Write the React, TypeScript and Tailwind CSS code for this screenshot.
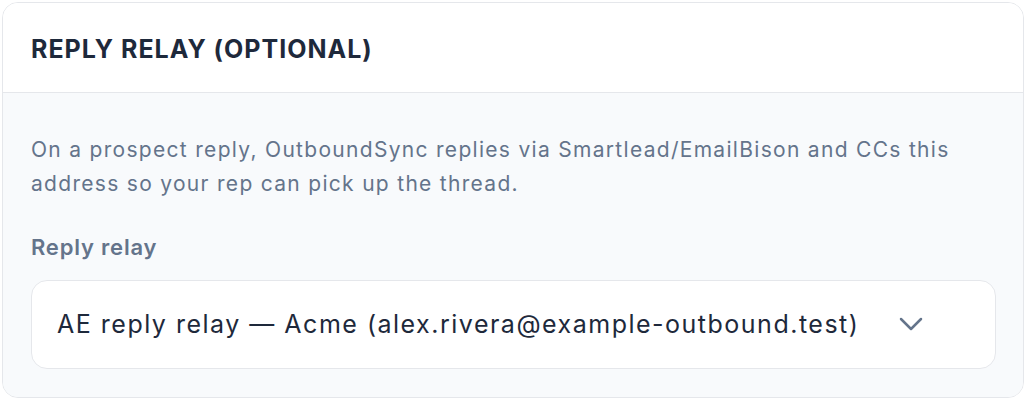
import React from 'react';

export default function App() {
  return (
    <div className="w-[1026px] h-[400px] p-[2px] bg-white" style={{ fontFamily: 'Inter, "Noto Sans", sans-serif' }}>
      <div className="h-full rounded-[16px] border border-[#e5e7eb] overflow-hidden flex flex-col">
        <div className="h-[90px] flex items-center px-[28px] bg-white border-b border-[#e5e7eb] shrink-0">
          <h2 className="text-[25px] font-bold tracking-[1px] text-[#1e293b] pt-[4px]">REPLY RELAY (OPTIONAL)</h2>
        </div>
        <div className="flex-1 bg-[#f8fafc] px-[28px] pt-[40px]">
          <p className="text-[21px] leading-[34px] tracking-[1.3px] text-[#64748b]">
            On a prospect reply, OutboundSync replies via Smartlead/EmailBison and CCs this address so your rep can pick up the thread.
          </p>
          <div className="mt-[31px] text-[22px] leading-[30px] font-semibold tracking-[0.8px] text-[#64748b]">Reply relay</div>
          <div className="mt-[18px] h-[89px] w-[965px] rounded-[16px] border border-[#e5e7eb] bg-white flex items-center pl-[25px] gap-[40px]">
            <span className="text-[25px] tracking-[1.5px] text-[#1e293b]">AE reply relay — Acme (alex.rivera@example-outbound.test)</span>
            <svg width="24" height="14" viewBox="0 0 24 14" fill="none" className="text-[#64748b] mt-[-2px]">
              <path d="M2 2 L12 12 L22 2" stroke="currentColor" strokeWidth="2.5" strokeLinecap="round" strokeLinejoin="round" />
            </svg>
          </div>
        </div>
      </div>
    </div>
  );
}
